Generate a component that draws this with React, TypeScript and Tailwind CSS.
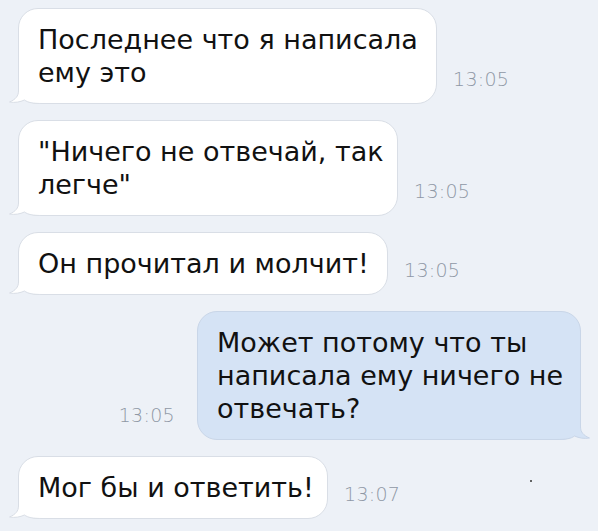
import type { ReactNode } from "react";

const font = { fontFamily: '"DejaVu Sans", "Liberation Sans", sans-serif' };

function Tail({ side, fill, stroke }: { side: "left" | "right"; fill: string; stroke: string }) {
  return (
    <svg
      width="34"
      height="23"
      viewBox="0 0 34 23"
      className={
        side === "left"
          ? "absolute -left-[10px] -bottom-[1px]"
          : "absolute -right-[10px] -bottom-[1px] -scale-x-100"
      }
    >
      <path
        d="M9.5 0 L9.5 10 C9.5 15 6.5 18.5 0.5 21 C6 22 11 21 15.5 19 C19 21.5 23 22.5 34 22.5 L34 0 Z"
        fill={fill}
      />
      <path
        d="M9.5 0 L9.5 10 C9.5 15 6.5 18.5 0.5 21 C6 22 11 21 15.5 19 C19 21.5 23 22.5 34 22.5"
        fill="none"
        stroke={stroke}
        strokeWidth="1"
      />
    </svg>
  );
}

function Time({ children, className = "" }: { children: ReactNode; className?: string }) {
  return (
    <span
      className={"text-[19px] leading-[19px] font-extralight tracking-[0.3px] text-[#8f98a5] " + className}
      style={font}
    >
      {children}
    </span>
  );
}

function Incoming({ width, lines, time }: { width: string; lines: string[]; time: string }) {
  return (
    <div className="flex items-end pl-[18px]">
      <div
        className={
          "relative rounded-[20px] border border-[#d9dee6] bg-white px-[19px] py-[14px] text-[27px] leading-[33px] whitespace-nowrap text-[#111111] " +
          width
        }
        style={font}
      >
        <Tail side="left" fill="#ffffff" stroke="#d9dee6" />
        <div className="relative">
          {lines.map((l) => (
            <div key={l}>{l}</div>
          ))}
        </div>
      </div>
      <Time className="mb-[15px] ml-[16px]">{time}</Time>
    </div>
  );
}

export default function App() {
  return (
    <div className="relative flex h-[531px] w-[598px] flex-col gap-[16px] overflow-hidden bg-[#edf1f7] pt-[8px]">
      <Incoming width="w-[419px]" lines={["Последнее что я написала", "ему это"]} time="13:05" />
      <Incoming width="w-[380px]" lines={['"Ничего не отвечай, так', 'легче"']} time="13:05" />
      <Incoming width="w-[370px]" lines={["Он прочитал и молчит!"]} time="13:05" />

      <div className="flex items-end justify-end pr-[17px]">
        <Time className="mb-[15px] mr-[22px]">13:05</Time>
        <div
          className="relative w-[384px] rounded-[20px] border border-[#c9d6e8] bg-[#d5e3f5] px-[19px] py-[14px] text-[27px] leading-[33px] whitespace-nowrap text-[#111111]"
          style={font}
        >
          <Tail side="right" fill="#d5e3f5" stroke="#c9d6e8" />
          <div className="relative">
            <div>Может потому что ты</div>
            <div>написала ему ничего не</div>
            <div>отвечать?</div>
          </div>
        </div>
      </div>

      <Incoming width="w-[310px]" lines={["Мог бы и ответить!"]} time="13:07" />

      <span className="absolute left-[530px] top-[480px] h-[2px] w-[2px] rounded-full bg-[#333]" />
    </div>
  );
}
